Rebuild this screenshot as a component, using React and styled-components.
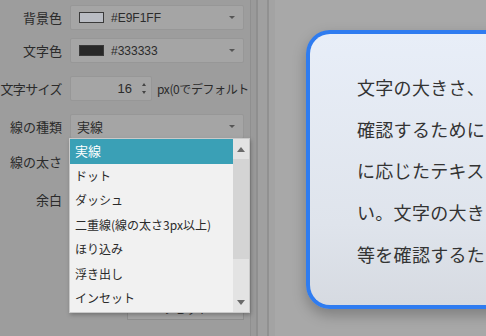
import React from 'react'
import styled, { createGlobalStyle } from 'styled-components'

// =============================================================================
const GlobalStyle = createGlobalStyle`
  html, body {
    margin: 0;
    padding: 0;
    width: 486px;
    height: 336px;
    overflow: hidden;
    background: #a6a6a6;
    font-family: "Noto Sans CJK JP", "Noto Sans", sans-serif;
  }
`;

const lineTypes = [
  '実線',
  'ドット',
  'ダッシュ',
  '二重線(線の太さ3px以上)',
  'ほり込み',
  '浮き出し',
  'インセット',
];

const previewLines = [
  '文字の大きさ、',
  '確認するために',
  'に応じたテキス',
  'い。文字の大き',
  '等を確認するた',
];

// Styled Component
const Page = styled.div`
  position: relative;
  display: flex;
  width: 486px;
  height: 336px;
  overflow: hidden;
`;

const Sidebar = styled.div`
  width: 251px;
  flex-shrink: 0;
  display: flex;
  flex-direction: column;
  padding-top: 5px;
  background: #9d9d9d;
  border-right: 1px solid #8f8f8f;
  box-sizing: border-box;
`;

const Row = styled.div`
  display: flex;
  align-items: center;
  height: 25px;
  margin-top: ${(p) => p.$mt || 0}px;
`;

const Label = styled.div`
  width: 62px;
  text-align: right;
  font-size: 13px;
  color: #2b2b2b;
  white-space: nowrap;
  margin-right: 8px;
  letter-spacing: ${(p) => p.$tight ? '-0.6px' : '0'};
`;

const Select = styled.div`
  width: 174px;
  height: 25px;
  box-sizing: border-box;
  display: flex;
  align-items: center;
  padding: 0 8px 0 6px;
  background: #a5a5a5;
  border: 1px solid #979797;
  border-radius: 2px;
  font-size: 13px;
  color: #2b2b2b;
`;

const Swatch = styled.span`
  width: 25px;
  height: 11px;
  box-sizing: border-box;
  margin: 0 7px 0 2px;
  border: 1px solid #3a3a3a;
  background: ${(p) => p.$color};
`;

const SelectText = styled.span`
  flex: 1;
  font-family: "Liberation Sans", "Noto Sans CJK JP", sans-serif;
  font-size: ${(p) => p.$size || 12}px;
`;

const Caret = styled.span`
  width: 0;
  height: 0;
  border-left: 3px solid transparent;
  border-right: 3px solid transparent;
  border-top: 3px solid #555;
`;

const NumberBox = styled.div`
  width: 82px;
  height: 25px;
  box-sizing: border-box;
  display: flex;
  align-items: center;
  justify-content: flex-end;
  padding-right: 5px;
  background: #a5a5a5;
  border: 1px solid #979797;
  border-radius: 2px;
  font-family: "Liberation Sans", sans-serif;
  font-size: 13px;
  color: #2b2b2b;
`;

const Spinner = styled.div`
  display: flex;
  flex-direction: column;
  gap: 5px;
  margin-left: 10px;
`;

const Tri = styled.span`
  width: 0;
  height: 0;
  border-left: 2.5px solid transparent;
  border-right: 2.5px solid transparent;
  ${(p) => p.$up
    ? 'border-bottom: 3px solid #444;'
    : 'border-top: 3px solid #444;'}
`;

const Unit = styled.span`
  margin-left: 5px;
  font-size: 12px;
  color: #2b2b2b;
  white-space: nowrap;
  letter-spacing: -0.4px;
`;

const ResetButton = styled.div`
  width: 117px;
  height: 23px;
  margin-left: 127px;
  margin-top: 85px;
  box-sizing: border-box;
  border: 1px solid #8e8e8e;
  background: #a3a3a3;
  display: flex;
  justify-content: center;
  align-items: center;
  font-size: 12px;
  color: #333;
`;

const Gutter = styled.div`
  width: 24px;
  flex-shrink: 0;
  background: linear-gradient(90deg,
    #9a9a9a 0 5px, #8f8f8f 5px 7px, #a0a0a0 7px 16px, #919191 16px 18px, #a3a3a3 18px);
`;

const Preview = styled.div`
  flex: 1;
  padding: 30px 0 0 31px;
  background: #a8a8a8;
`;

const Card = styled.div`
  width: 240px;
  height: 279px;
  box-sizing: border-box;
  border: 4px solid #2f7cf0;
  border-right: none;
  border-radius: 24px 0 0 24px;
  padding: 33px 0 0 47px;
  background: linear-gradient(180deg, #e8eef8 0%, #dfe4ec 70%, #d6dae1 100%);
  box-shadow: 0 6px 14px rgba(0, 0, 0, 0.25);
`;

const CardLine = styled.p`
  margin: 0;
  font-size: 18px;
  line-height: 41.7px;
  color: #333;
  white-space: nowrap;
  letter-spacing: 0.3px;
`;

const Dropdown = styled.div`
  position: absolute;
  left: 69px;
  top: 138px;
  width: 181px;
  height: 175px;
  box-sizing: border-box;
  display: flex;
  background: #f1f1f1;
  border: 1px solid #c9c9c9;
  box-shadow: 1px 2px 4px rgba(0, 0, 0, 0.25);
`;

const List = styled.ul`
  flex: 1;
  margin: 0;
  padding: 0;
  list-style: none;
`;

const Item = styled.li`
  height: 24.5px;
  line-height: 24.5px;
  padding-left: 5px;
  white-space: nowrap;
  overflow: hidden;
  color: ${(p) => (p.$active ? '#fff' : '#2a2a2a')};
  background: ${(p) => (p.$active ? '#3aa0b6' : 'transparent')};
  font-size: ${(p) => (p.$active ? 13 : 12)}px;
`;

const Scrollbar = styled.div`
  width: 16px;
  display: flex;
  flex-direction: column;
  align-items: center;
  background: #e3e3e3;
`;

const ScrollArrow = styled.div`
  height: 20px;
  display: flex;
  align-items: center;
  justify-content: center;
`;

const ScrollTrack = styled.div`
  flex: 1;
  width: 100%;
`;

const Thumb = styled.div`
  height: 100px;
  background: #d4d4d4;
`;

const Arrow = styled.span`
  width: 0;
  height: 0;
  border-left: 4px solid transparent;
  border-right: 4px solid transparent;
  ${(p) => p.$up
    ? 'border-bottom: 5px solid #6a6a6a;'
    : 'border-top: 5px solid #6a6a6a;'}
`;

// =============================================================================
const App = () => {
  return (
    <>
      <GlobalStyle />
      <Page>
        <Sidebar>
          <Row>
            <Label>背景色</Label>
            <Select>
              <Swatch $color='#b9bcc3' />
              <SelectText>#E9F1FF</SelectText>
              <Caret />
            </Select>
          </Row>
          <Row $mt={8}>
            <Label>文字色</Label>
            <Select>
              <Swatch $color='#282828' />
              <SelectText>#333333</SelectText>
              <Caret />
            </Select>
          </Row>
          <Row $mt={13}>
            <Label $tight>文字サイズ</Label>
            <NumberBox>
              16
              <Spinner>
                <Tri $up />
                <Tri />
              </Spinner>
            </NumberBox>
            <Unit>px(0でデフォルト</Unit>
          </Row>
          <Row $mt={13}>
            <Label>線の種類</Label>
            <Select>
              <SelectText $size={13}>実線</SelectText>
              <Caret />
            </Select>
          </Row>
          <Row $mt={10}>
            <Label>線の太さ</Label>
          </Row>
          <Row $mt={13}>
            <Label>余白</Label>
          </Row>
          <ResetButton>リセット</ResetButton>
        </Sidebar>
        <Gutter />
        <Preview>
          <Card>
            {previewLines.map((line) => (
              <CardLine key={line}>{line}</CardLine>
            ))}
          </Card>
        </Preview>

        <Dropdown>
          <List>
            {lineTypes.map((name, i) => (
              <Item key={name} $active={i === 0}>{name}</Item>
            ))}
          </List>
          <Scrollbar>
            <ScrollArrow><Arrow $up /></ScrollArrow>
            <ScrollTrack><Thumb /></ScrollTrack>
            <ScrollArrow><Arrow /></ScrollArrow>
          </Scrollbar>
        </Dropdown>
      </Page>
    </>
  )
}

export default App
